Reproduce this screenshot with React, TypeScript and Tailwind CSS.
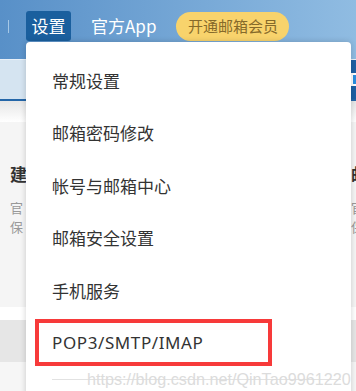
import React from "react";

const menuItems = ["常规设置", "邮箱密码修改", "帐号与邮箱中心", "邮箱安全设置", "手机服务"];

const cjk = { fontFamily: '"Noto Sans CJK SC", "Noto Sans", sans-serif' };

const App: React.FC = () => {
  return (
    <div className="relative w-[356px] h-[391px] overflow-hidden bg-white" style={cjk}>
      {/* header bar */}
      <div className="h-[59px] bg-gradient-to-r from-[#5890c8] to-[#90bce2] flex items-start">
        <div className="mt-[20px] ml-[8px] w-px h-[13px] bg-[#a6c8e6]" />
        <div className="mt-[11px] ml-[17px] w-[45px] h-[30px] rounded-[3px] bg-[#1a5f9e] flex items-center justify-center text-[17px] text-white">
          设置
        </div>
        <div className="mt-[11px] ml-[20px] h-[30px] flex items-center text-[17px] text-white">
          官方App
        </div>
        <div className="mt-[12px] ml-[20px] w-[113px] h-[29px] rounded-full bg-[#f8d36c] flex items-center justify-center text-[15px] text-[#866a2a]">
          开通邮箱会员
        </div>
      </div>
      <div className="h-px bg-[#e8f0f8]" />
      {/* sub nav */}
      <div className="h-[39px] flex">
        <div className="flex-1 bg-[#d5e4f1]" />
        <div className="w-[5px] bg-[#1e60a4] flex items-center">
          <div className="w-[5px] h-[13px] border-2 border-r-0 border-white bg-[#2a8ee0]" />
        </div>
      </div>
      <div className="h-[2px] bg-[#2466a8]" />
      <div className="h-[21px] bg-gradient-to-b from-[#e6e6e6] to-white" />
      {/* content panel */}
      <div className="h-[185px] bg-[#f5f5f5] flex justify-between">
        <div className="pl-[10px] pt-[42px]">
          <div className="text-[17px] font-bold text-[#333] leading-[20px]">建</div>
          <div className="mt-[14px] text-[13px] text-[#999] leading-[19px]">官</div>
          <div className="text-[13px] text-[#999] leading-[19px]">保</div>
        </div>
        <div className="pt-[42px] w-[5px] overflow-hidden">
          <div className="text-[17px] font-bold text-[#333] leading-[20px]">邮</div>
          <div className="mt-[14px] text-[13px] text-[#999] leading-[19px]">官</div>
          <div className="text-[13px] text-[#999] leading-[19px]">保</div>
        </div>
      </div>
      <div className="h-[13px] bg-white" />
      <div className="h-[42px] bg-[#e6e6e6]" />
      <div className="h-[40px] bg-[#f6f6f6]" />

      {/* dropdown menu */}
      <div className="absolute left-[26px] top-[42px] w-[325px] h-[360px] bg-white rounded-t-[4px] shadow-[0_0_6px_rgba(0,0,0,0.18)] pt-[12px]">
        {menuItems.map((item) => (
          <div key={item} className="h-[52.5px] flex items-center pl-[26px] text-[17px] text-[#333]">
            {item}
          </div>
        ))}
        <div className="h-[52.5px] flex items-center pl-[9px]">
          <div
            className="w-[237px] h-[47px] border-4 border-[#f73a3a] flex items-center pl-[13px] text-[17px] tracking-[0.6px] text-[#333]"
            style={{ fontFamily: '"Noto Sans", sans-serif' }}
          >
            POP3/SMTP/IMAP
          </div>
        </div>
        <div className="relative h-[20px] ml-[26px] mr-[10px] flex items-center">
          <div className="w-full h-px bg-[#e2e2e2]" />
          <div
            className="absolute left-[35px] top-0 text-[16.2px] leading-[20px] text-[#dcdcdc] whitespace-nowrap"
            style={{ fontFamily: '"Liberation Sans", Arial, sans-serif' }}
          >
            https://blog.csdn.net/QinTao9961220
          </div>
        </div>
      </div>
    </div>
  );
};

export default App;
